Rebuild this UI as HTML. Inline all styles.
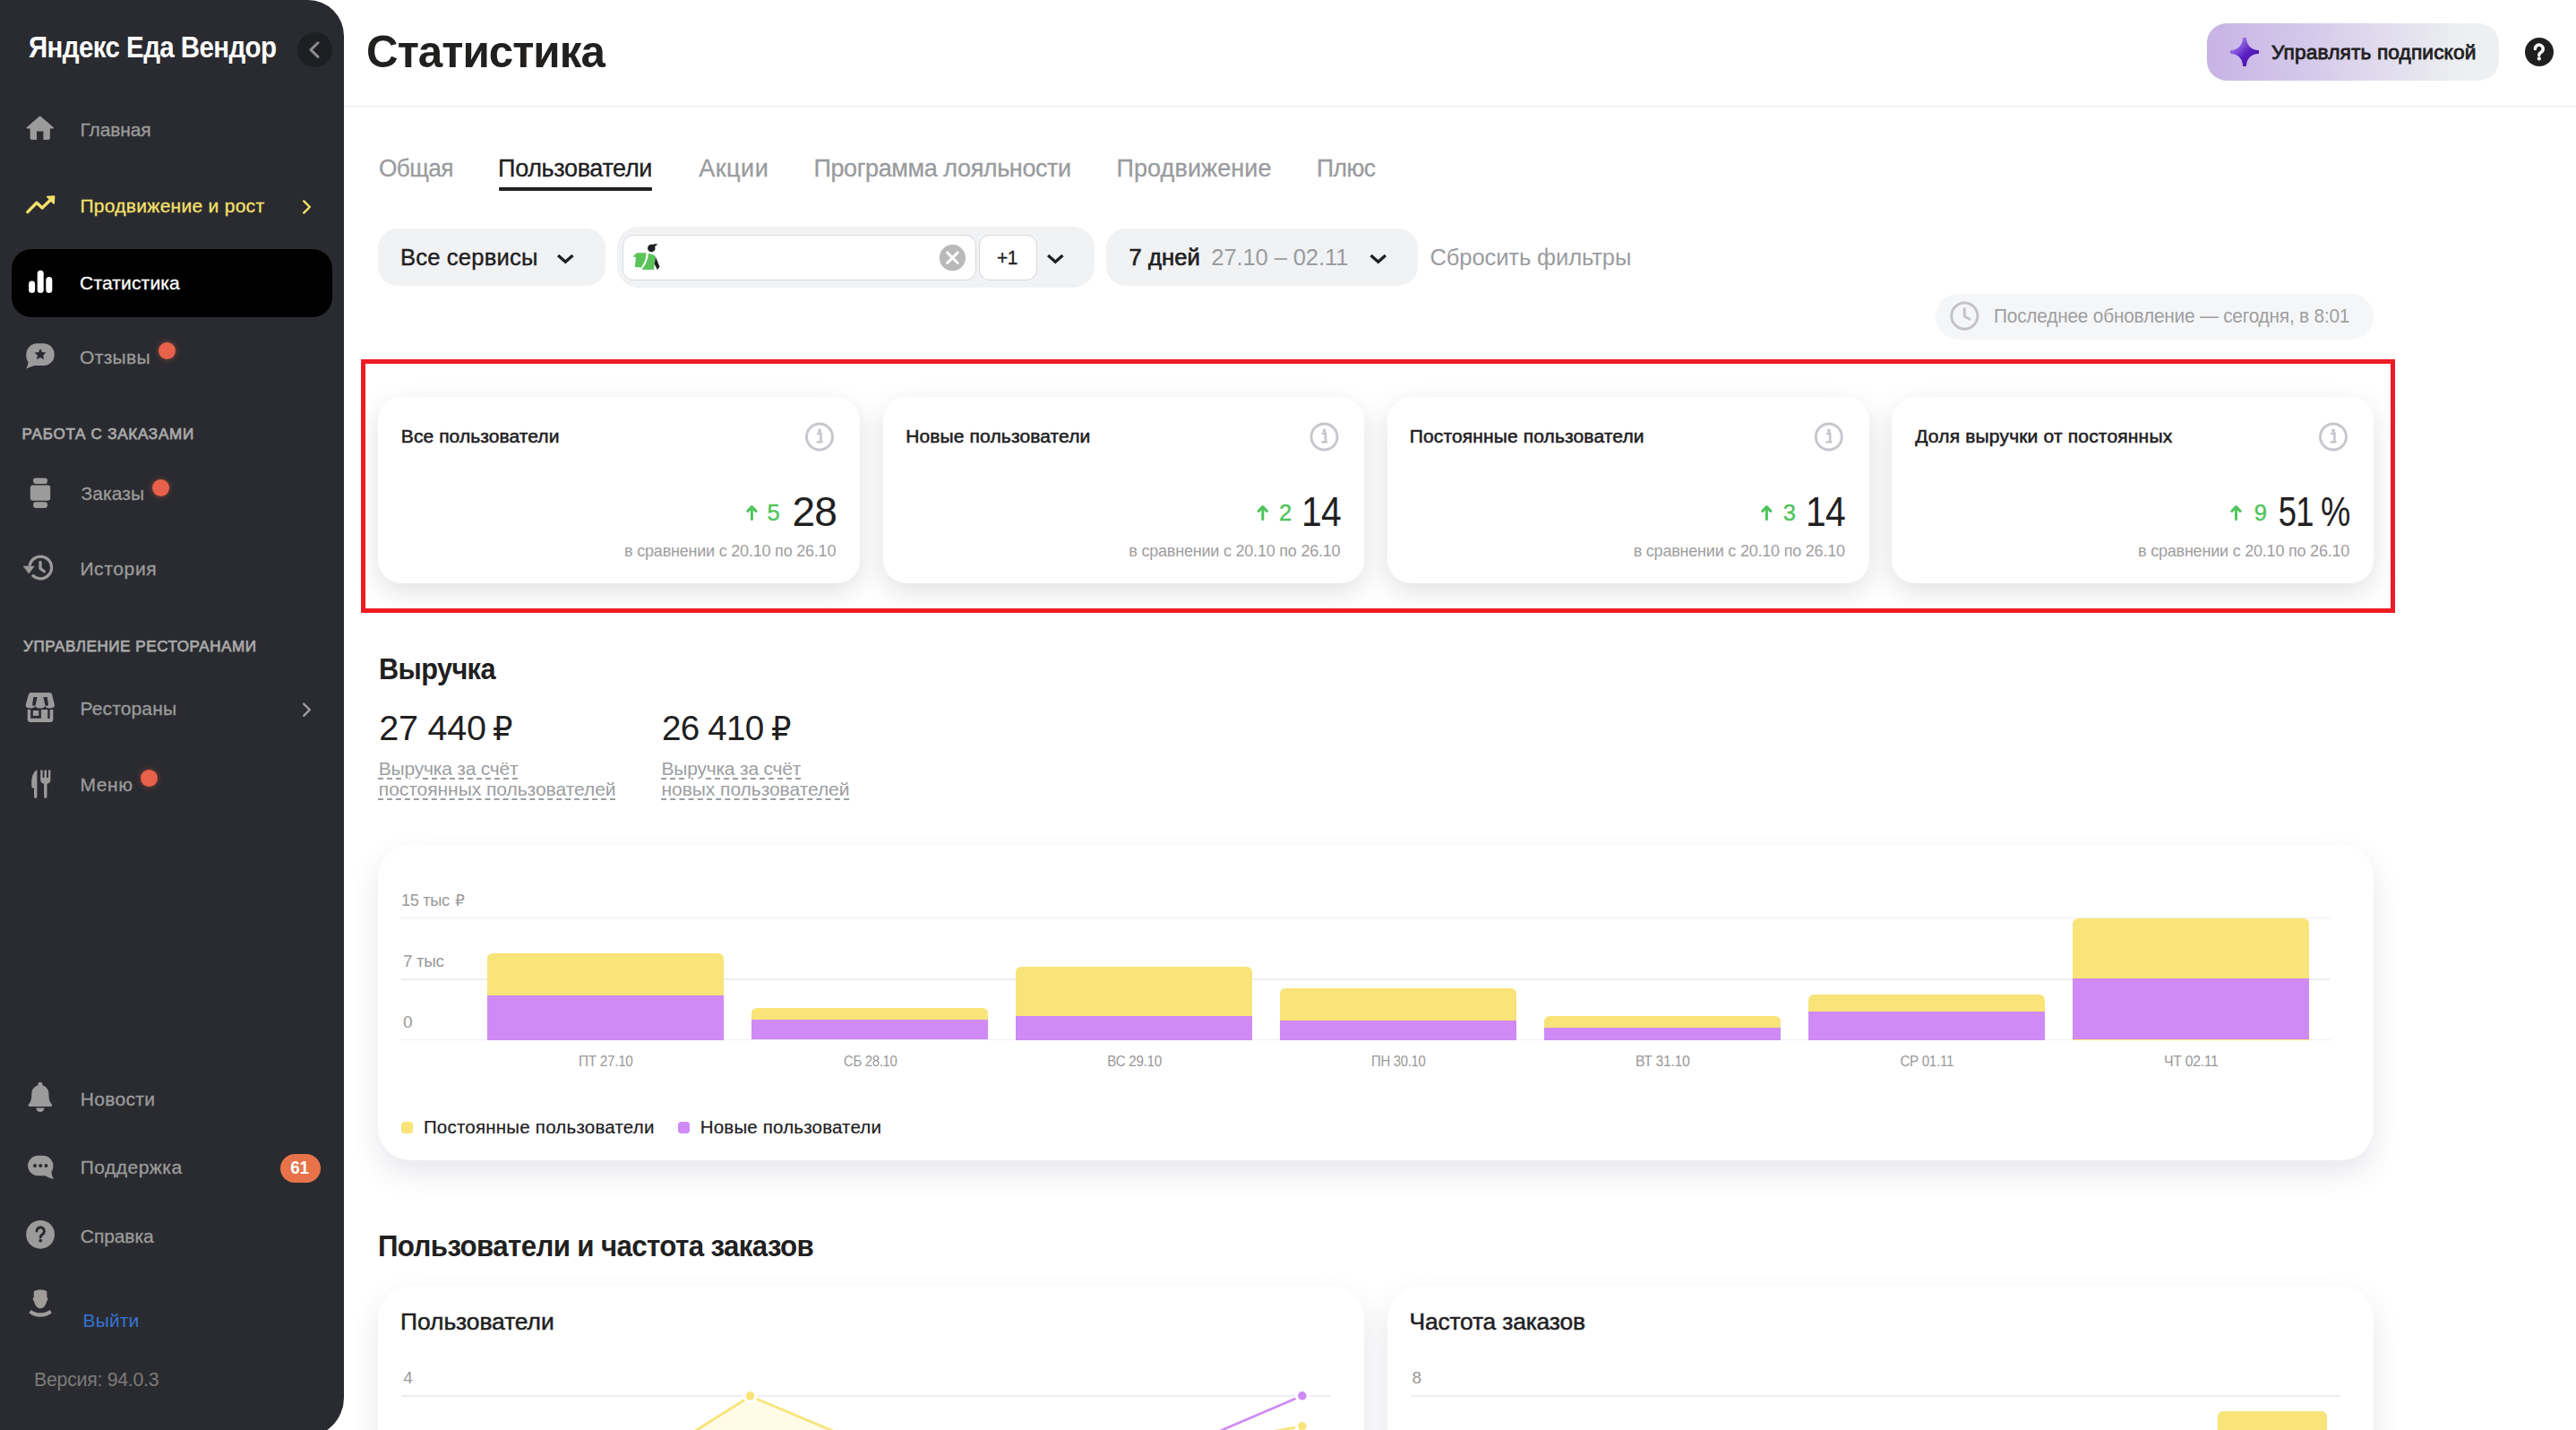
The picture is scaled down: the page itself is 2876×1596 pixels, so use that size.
<!DOCTYPE html>
<html lang="ru"><head><meta charset="utf-8"><title>Статистика</title>
<style>
html,body{margin:0;padding:0}
body{width:2876px;height:1596px;overflow:hidden;background:#fff;position:relative;font-family:"Liberation Sans","DejaVu Sans",sans-serif;color:#21201f}
.t{position:absolute;white-space:nowrap;line-height:1}
.du{text-decoration:underline dashed;text-decoration-thickness:1.5px;text-underline-offset:3px}
.a{position:absolute}
.sb{left:0;top:0;width:384px;height:1604px;background:#2a2b30;border-radius:0 40px 44px 0}
.card{position:absolute;background:#fff;border-radius:26px;box-shadow:0 10px 30px rgba(0,0,0,.12)}
.bigcard{position:absolute;background:#fff;border-radius:36px;box-shadow:0 14px 32px rgba(50,60,90,.12)}
.pill{position:absolute;background:#f1f2f4;border-radius:22px}
.wbox{position:absolute;background:#fff;border:1px solid #d6d8dc;border-radius:12px;box-sizing:border-box}
.dot{position:absolute;width:19px;height:19px;border-radius:50%;background:#e8614a;box-shadow:0 0 6px rgba(232,97,74,.5)}
.gl{position:absolute;height:1.8px;background:#eceef1}
svg{position:absolute;overflow:visible}

</style></head><body>
<div class="a sb"></div>
<div class="a" style="left:332px;top:36px;width:39px;height:39px;border-radius:50%;background:#1e1f22"></div>
<div class="a" style="left:13px;top:278px;width:358px;height:76px;border-radius:22px;background:#000"></div>
<div class="dot" style="left:177px;top:382.2px"></div>
<div class="dot" style="left:170px;top:535px"></div>
<div class="dot" style="left:157px;top:859px"></div>
<div class="a" style="left:313px;top:1288px;width:45px;height:32px;border-radius:16px;background:#e8734a"></div>

<div class="a" style="left:384px;top:117.5px;width:2492px;height:1.5px;background:#e4e6ea"></div>
<div class="a" style="left:557px;top:209px;width:171px;height:4px;background:#21201f;border-radius:1px"></div>
<div class="pill" style="left:422px;top:255px;width:254px;height:64px"></div>
<div class="pill" style="left:689px;top:253px;width:533px;height:68px;border-radius:24px"></div>
<div class="wbox" style="left:695px;top:262px;width:394.5px;height:51px"></div>
<div class="wbox" style="left:1093px;top:262px;width:64.5px;height:51px"></div>
<div class="pill" style="left:1235px;top:255px;width:348px;height:64px"></div>
<div class="a" style="left:2464px;top:26px;width:326px;height:64px;border-radius:22px;background:linear-gradient(90deg,#c7b3e5 0%,#d5c9ea 35%,#eceef1 85%,#eef0f2 100%)"></div>
<div class="a" style="left:2819px;top:42px;width:32px;height:32px;border-radius:50%;background:#1f1f1f"></div>
<div class="a" style="left:2161px;top:328px;width:489px;height:51px;border-radius:26px;background:#f5f6f8"></div>

<div class="card" style="left:422px;top:443px;width:537.8px;height:207.8px"></div>
<div class="card" style="left:985.6px;top:443px;width:537.6px;height:207.8px"></div>
<div class="card" style="left:1549px;top:443px;width:537.5px;height:207.8px"></div>
<div class="card" style="left:2112.2px;top:443px;width:537.8px;height:207.8px"></div>

<div class="a" style="left:403px;top:401px;width:2271px;height:283px;border:5px solid #ed1c24;box-sizing:border-box"></div>
<div class="bigcard" style="left:422px;top:943px;width:2228px;height:352.2px"></div>
<div class="gl" style="left:448px;top:1023.7px;width:2154px"></div>
<div class="gl" style="left:448px;top:1091.8px;width:2154px"></div>
<div class="gl" style="left:448px;top:1159.7px;width:2154px"></div>

<div class="bigcard" style="left:422px;top:1436px;width:1101px;height:300px"></div>
<div class="bigcard" style="left:1549px;top:1436px;width:1101px;height:300px"></div>
<div class="gl" style="left:448px;top:1557.1px;width:1038px"></div>
<div class="gl" style="left:1575px;top:1557.1px;width:1038px"></div>
<div class="a" style="left:544.2px;top:1064.4px;width:264.1px;height:96.1px;background:#f8e478;border-radius:6px 6px 0 0"></div>
<div class="a" style="left:544.2px;top:1110.5px;width:264.1px;height:50.0px;background:#d08af5"></div>
<div class="a" style="left:839.1px;top:1124.8px;width:264.1px;height:35.7px;background:#f8e478;border-radius:6px 6px 0 0"></div>
<div class="a" style="left:839.1px;top:1137.7px;width:264.1px;height:22.8px;background:#d08af5"></div>
<div class="a" style="left:1134.1px;top:1079.0px;width:264.1px;height:81.5px;background:#f8e478;border-radius:6px 6px 0 0"></div>
<div class="a" style="left:1134.1px;top:1134.0px;width:264.1px;height:26.5px;background:#d08af5"></div>
<div class="a" style="left:1429.0px;top:1103.3px;width:264.1px;height:57.2px;background:#f8e478;border-radius:6px 6px 0 0"></div>
<div class="a" style="left:1429.0px;top:1139.0px;width:264.1px;height:21.5px;background:#d08af5"></div>
<div class="a" style="left:1723.9px;top:1133.6px;width:264.1px;height:26.9px;background:#f8e478;border-radius:6px 6px 0 0"></div>
<div class="a" style="left:1723.9px;top:1147.0px;width:264.1px;height:13.5px;background:#d08af5"></div>
<div class="a" style="left:2018.9px;top:1109.8px;width:264.1px;height:50.7px;background:#f8e478;border-radius:6px 6px 0 0"></div>
<div class="a" style="left:2018.9px;top:1129.0px;width:264.1px;height:31.5px;background:#d08af5"></div>
<div class="a" style="left:2313.8px;top:1025.0px;width:264.1px;height:135.5px;background:#f8e478;border-radius:6px 6px 0 0"></div>
<div class="a" style="left:2313.8px;top:1091.6px;width:264.1px;height:68.9px;background:#d08af5"></div>
<div class="a" style="left:448.2px;top:1252px;width:12.8px;height:12.8px;border-radius:3.5px;background:#f8e478"></div>
<div class="a" style="left:756.8px;top:1252px;width:12.8px;height:12.8px;border-radius:3.5px;background:#d08af5"></div>
<svg width="2876" height="1596" viewBox="0 0 2876 1596" style="left:0;top:0">
<path d="M774.8 1598 L837.6 1558.3 L932.2 1598 Z" fill="#fffbe6"/>
<path d="M774.8 1598 L837.6 1558.3 L932.2 1598" fill="none" stroke="#f8e478" stroke-width="2.8" stroke-linejoin="round"/>
<path d="M1359.7 1598 L1453.9 1557.8" fill="none" stroke="#d08af5" stroke-width="2.7"/>
<path d="M1418 1598 L1453.9 1591.8" fill="none" stroke="#f8e478" stroke-width="2.7"/>
<circle cx="837.6" cy="1558" r="6.4" fill="#f8e478" stroke="#fff" stroke-width="3.2"/>
<circle cx="1453.9" cy="1557.8" r="6.4" fill="#d08af5" stroke="#fff" stroke-width="3.2"/>
<circle cx="1453.9" cy="1591.8" r="6.4" fill="#f8e478" stroke="#fff" stroke-width="3.2"/>
</svg>
<div class="a" style="left:2476.1px;top:1575px;width:121.7px;height:40px;background:#f8e478;border-radius:6px 6px 0 0"></div>
<svg width="2876" height="1596" viewBox="0 0 2876 1596" style="left:0;top:0">
<defs>
<linearGradient id="sg" x1="0" y1="0" x2="1" y2="1"><stop offset="0.15" stop-color="#a683ee"/><stop offset="0.55" stop-color="#5a1fc2"/><stop offset="1" stop-color="#3d0f96"/></linearGradient>
</defs>
<!-- collapse chevron -->
<path d="M355 47.8 l-8 7.8 l8 7.8" fill="none" stroke="#8c8c8c" stroke-width="3" stroke-linecap="round" stroke-linejoin="round"/>
<!-- home -->
<g transform="translate(29.8 129)" fill="#9b9b9b">
<path d="M14.9 0.3 L30 13.2 a0.8 0.8 0 0 1 -0.5 1.3 H26 V25.2 a1.8 1.8 0 0 1 -1.8 1.8 H18.6 V17.5 H11.2 V27 H5.6 a1.8 1.8 0 0 1 -1.8 -1.8 V14.5 H0.3 a0.8 0.8 0 0 1 -0.5 -1.3 Z"/>
</g>
<!-- trending -->
<g transform="translate(29.8 218.3)" fill="none" stroke="#f5e16b" stroke-width="3.4" stroke-linecap="round" stroke-linejoin="round">
<path d="M1 18.3 L11.2 8 L17.3 13.8 L26.5 5"/>
<path d="M22.8 1.2 L30.8 0.6 L30.4 8.8 Z" fill="#f5e16b" stroke-width="1.5"/>
</g>
<!-- bars -->
<g fill="#fff">
<rect x="32.1" y="313.6" width="7" height="13.4" rx="3.5"/>
<rect x="41.7" y="301.7" width="7" height="25.3" rx="3.5"/>
<rect x="51.3" y="309" width="7" height="18" rx="3.5"/>
</g>
<!-- review bubble -->
<g transform="translate(29 383.3)">
<path d="M12.5 0 H19.5 A12.2 12.2 0 0 1 31.7 12.2 V12.6 A12.2 12.2 0 0 1 19.5 24.8 H9.5 C6.5 25.5 3.5 26.8 0.3 28.2 C1.3 25.8 2.3 23.5 2.6 21 A12.2 12.2 0 0 1 0.3 12.4 A12.2 12.2 0 0 1 12.5 0 Z" fill="#9b9b9b"/>
<path d="M16 5.6 l1.95 4.1 4.5 .6 -3.3 3.1 .85 4.45 -4 -2.2 -4 2.2 .85 -4.45 -3.3 -3.1 4.5 -.6 Z" fill="#2a2b30"/>
</g>
<!-- orders (watch) -->
<g fill="#9b9b9b">
<rect x="33.8" y="541.6" width="22.4" height="17.2" rx="3"/>
<rect x="37.1" y="533.4" width="15.8" height="6.6" rx="2.4"/>
<rect x="37.1" y="560.3" width="15.8" height="6.6" rx="2.4"/>
</g>
<!-- history -->
<g transform="translate(45.2 633.5)" fill="none" stroke="#9b9b9b" stroke-width="3.3" stroke-linecap="round" stroke-linejoin="round">
<path d="M-12.2 -2 A12.35 12.35 0 1 1 -9.2 8.2" stroke-linecap="butt"/>
<path d="M-0.2 -6.2 V1 L4.1 4.3"/>
<path d="M-18.8 -1.5 H-7 L-12.8 6.4 Z" fill="#9b9b9b" stroke-width="0.6"/>
</g>
<!-- store -->
<g fill="#9b9b9b">
<path d="M34.4 773 H55.6 a2.5 2.5 0 0 1 2.4 1.8 L60.9 786.6 V787.6 a5.37 3 0 0 1 -10.73 0 a5.37 3 0 0 1 -10.74 0 a5.37 3 0 0 1 -10.73 0 V786.6 L32 774.8 a2.5 2.5 0 0 1 2.4 -1.8 Z"/>
<path d="M30.7 791.9 H59.3 V802.7 a3.2 3.2 0 0 1 -3.2 3.2 H33.9 a3.2 3.2 0 0 1 -3.2 -3.2 Z"/>
<path d="M37.3 778.1 H41.7 L39.8 786 a1.9 1.9 0 0 1 -3.7 .6 Z M48.3 778.1 H52.7 L54 786.6 a1.9 1.9 0 0 1 -3.7 -.4 Z M34.2 791.9 H45.9 V801.7 H34.2 Z M53.2 791.9 H55.7 V801 a1.25 1.25 0 0 1 -2.5 0 Z" fill="#2a2b30"/>
<rect x="36.8" y="793" width="6.5" height="5.9"/>
</g>
<!-- fork & knife -->
<g transform="translate(34.6 859)" fill="#9b9b9b">
<path d="M6.8 0 V30.2 a1.7 1.7 0 0 1 -3.4 0 V20.4 H1 C-0.2 12 1 3.5 6.8 0 Z"/>
<path d="M10.6 0.6 h2.4 V9 h1.9 V0.6 h2.6 V9 h1.9 V0.6 h2.4 V11.2 a4.6 4.6 0 0 1 -3.9 4.5 V30.2 a1.7 1.7 0 0 1 -3.4 0 V15.7 a4.6 4.6 0 0 1 -3.9 -4.5 Z"/>
</g>
<!-- bell -->
<g transform="translate(31.7 1207.8)" fill="#9b9b9b">
<path d="M13.2 0 a2.6 2.6 0 0 1 2.6 2.6 V3.4 C20.6 4.8 22.8 9 22.8 13.6 C22.8 19.5 24 22.3 26 24.4 a1.6 1.6 0 0 1 -1.2 2.8 H1.6 A1.6 1.6 0 0 1 0.4 24.4 C2.4 22.3 3.6 19.5 3.6 13.6 C3.6 9 5.8 4.8 10.6 3.4 V2.6 A2.6 2.6 0 0 1 13.2 0 Z"/>
<path d="M8.6 28.6 h9.2 a4.6 4.6 0 0 1 -9.2 0 Z"/>
</g>
<!-- chat -->
<g transform="translate(30.8 1289.7)">
<path d="M12 0 H17 A11.6 11.6 0 0 1 28.6 11.3 C28.6 14.5 27.8 16.6 26.6 18.4 C26.9 21.2 27.8 23.8 29 26.4 C25.6 25.6 22.6 24.3 20 22.6 H12 A11.6 11.6 0 0 1 0.2 11.3 A11.6 11.6 0 0 1 12 0 Z" fill="#9b9b9b"/>
<circle cx="8.2" cy="11.4" r="2" fill="#2a2b30"/><circle cx="14.4" cy="11.4" r="2" fill="#2a2b30"/><circle cx="20.6" cy="11.4" r="2" fill="#2a2b30"/>
</g>
<!-- help (sidebar) -->
<circle cx="45.1" cy="1377.8" r="15.9" fill="#9b9b9b"/>
<path d="M41 1374 a4.2 4.2 0 1 1 6.4 3.6 c-1.5 .9 -2.2 1.7 -2.2 3.2" fill="none" stroke="#2a2b30" stroke-width="3" stroke-linecap="round"/>
<circle cx="45.2" cy="1384.6" r="1.9" fill="#2a2b30"/>
<!-- user -->
<g transform="translate(32.8 1438.9)" fill="#a09c99">
<path d="M5 2.4 C8 0 16.6 0 19.6 2.4 V9 C21 9.4 21 12.6 19.4 13 C18.6 17.6 15.6 21.4 12.3 21.4 C9 21.4 6 17.6 5.2 13 C3.6 12.6 3.6 9.4 5 9 Z"/>
<path d="M-0.4 26.4 C6.5 32.4 18 32.4 25 26.4 L22.8 23 C16.8 27.6 7.8 27.6 1.8 23 Z"/>
</g>
<!-- rest chevrons -->
<path d="M339.2 224.4 l6.6 6.6 l-6.6 6.6" fill="none" stroke="#f5e16b" stroke-width="2.4" stroke-linecap="round" stroke-linejoin="round"/>
<path d="M339.2 785.6 l6.6 6.6 l-6.6 6.6" fill="none" stroke="#9b9b9b" stroke-width="2.4" stroke-linecap="round" stroke-linejoin="round"/>

<!-- filter chevrons -->
<g fill="none" stroke="#1f2023" stroke-width="3.3" stroke-linecap="butt" stroke-linejoin="miter">
<path d="M623.1 285 L631.3 292.2 L639.5 285"/>
<path d="M1170.1 285 L1178.3 292.2 L1186.5 285"/>
<path d="M1530.5 285 L1538.7 292.2 L1546.9 285"/>
</g>
<!-- clear -->
<circle cx="1063.4" cy="287.7" r="14.6" fill="#b9b9b9"/>
<path d="M1057.6 281.9 l11.6 11.6 M1069.2 281.9 l-11.6 11.6" stroke="#fff" stroke-width="3" stroke-linecap="round"/>
<!-- courier -->
<g>
<path d="M711.4 282.3 L721.6 282.3 C721.4 287.2 720 292.6 716.9 296.8 L716.4 298.4 L708.8 298 L710 286.9 L706.9 286.5 C708.2 284.6 709.6 283 711.4 282.3 Z" fill="#5bc358"/>
<path d="M723.9 283 C727.6 283.3 730.4 284.6 731.8 286.2 L730 300.9 L716.8 301.1 L717.6 299 C721.2 295 723.4 289.6 723.9 283 Z" fill="#5bc358"/>
<path d="M731.9 286.4 L736.3 297.3 C735.8 298.8 735 300.2 733.8 301 L730.8 294.8 Z" fill="#1f2023"/>
<circle cx="727.3" cy="276.9" r="4.25" fill="#1f2023"/>
<path d="M728.6 273.2 C730.4 272 732.2 272.4 734 272.1 C733.6 273.8 732 274.8 730.4 275.2 Z" fill="#1f2023"/>
</g>
<!-- star sparkle -->
<path d="M2504.2 42 H2507.8 C2508.6 51 2513 55.4 2522 56.2 V59.8 C2513 60.6 2508.6 65 2507.8 74 H2504.2 C2503.4 65 2499 60.6 2490 59.8 V56.2 C2499 55.4 2503.4 51 2504.2 42 Z" fill="url(#sg)"/>
<!-- help top -->
<path d="M2830.4 54.6 a4.4 4.4 0 1 1 6.7 3.7 c-1.5 .9 -2.3 1.7 -2.3 3.1" fill="none" stroke="#fff" stroke-width="3.5" stroke-linecap="round"/>
<circle cx="2834.8" cy="65.4" r="2.1" fill="#fff"/>
<!-- clock -->
<circle cx="2193.3" cy="352.6" r="14.6" fill="none" stroke="#c4c4c6" stroke-width="3"/>
<path d="M2193.3 344.5 V353 L2199 356.2" fill="none" stroke="#c4c4c6" stroke-width="3" stroke-linecap="round" stroke-linejoin="round"/>
<!-- info icons -->
<g fill="none" stroke="#c5c7cc" stroke-width="2.9">
<circle cx="915" cy="487.5" r="14.5"/>
<circle cx="915" cy="480.5" r="1.9" fill="#c5c7cc" stroke="none"/>
<path d="M912.2 484.2 L916.4 483.4 V492.6 M911.8 493.3 H918.6" stroke-width="2.6" stroke-linejoin="round"/>
</g>
<g transform="translate(563.5 0)"><g fill="none" stroke="#c5c7cc" stroke-width="2.9">
<circle cx="915" cy="487.5" r="14.5"/>
<circle cx="915" cy="480.5" r="1.9" fill="#c5c7cc" stroke="none"/>
<path d="M912.2 484.2 L916.4 483.4 V492.6 M911.8 493.3 H918.6" stroke-width="2.6" stroke-linejoin="round"/>
</g></g><g transform="translate(1126.8 0)"><g fill="none" stroke="#c5c7cc" stroke-width="2.9">
<circle cx="915" cy="487.5" r="14.5"/>
<circle cx="915" cy="480.5" r="1.9" fill="#c5c7cc" stroke="none"/>
<path d="M912.2 484.2 L916.4 483.4 V492.6 M911.8 493.3 H918.6" stroke-width="2.6" stroke-linejoin="round"/>
</g></g><g transform="translate(1690 0)"><g fill="none" stroke="#c5c7cc" stroke-width="2.9">
<circle cx="915" cy="487.5" r="14.5"/>
<circle cx="915" cy="480.5" r="1.9" fill="#c5c7cc" stroke="none"/>
<path d="M912.2 484.2 L916.4 483.4 V492.6 M911.8 493.3 H918.6" stroke-width="2.6" stroke-linejoin="round"/>
</g></g>
<!-- green arrows -->
<g fill="none" stroke="#4fc45b" stroke-width="3" stroke-linecap="round" stroke-linejoin="round">
<path d="M839.4 579.6 V566.4 M834.8 570.4 L839.4 565.6 L844 570.4"/>
</g>
<g transform="translate(570.4 0)"><g fill="none" stroke="#4fc45b" stroke-width="3" stroke-linecap="round" stroke-linejoin="round">
<path d="M839.4 579.6 V566.4 M834.8 570.4 L839.4 565.6 L844 570.4"/>
</g></g><g transform="translate(1133 0)"><g fill="none" stroke="#4fc45b" stroke-width="3" stroke-linecap="round" stroke-linejoin="round">
<path d="M839.4 579.6 V566.4 M834.8 570.4 L839.4 565.6 L844 570.4"/>
</g></g><g transform="translate(1657.1 0)"><g fill="none" stroke="#4fc45b" stroke-width="3" stroke-linecap="round" stroke-linejoin="round">
<path d="M839.4 579.6 V566.4 M834.8 570.4 L839.4 565.6 L844 570.4"/>
</g></g>
</svg>

<span class="t" style="font-size:34px;left:31.8px;top:35.0px;color:#ffffff;font-weight:700;letter-spacing:-0.68px;transform:scaleX(0.8679);transform-origin:left center;">Яндекс Еда Вендор</span>
<span class="t" style="font-size:21px;left:89.5px;top:134.0px;color:#9b9b9b;letter-spacing:-0.13px;-webkit-text-stroke:0.3px currentColor;">Главная</span>
<span class="t" style="font-size:21px;left:89.5px;top:219.0px;color:#f5e16b;letter-spacing:0.28px;-webkit-text-stroke:0.3px currentColor;">Продвижение и рост</span>
<span class="t" style="font-size:21px;left:89.1px;top:305.0px;color:#ffffff;letter-spacing:0.15px;-webkit-text-stroke:0.3px currentColor;">Статистика</span>
<span class="t" style="font-size:21px;left:89.1px;top:388.0px;color:#9b9b9b;letter-spacing:0.31px;-webkit-text-stroke:0.3px currentColor;">Отзывы</span>
<span class="t" style="font-size:17px;left:24.6px;top:476.0px;color:#a9a9a9;letter-spacing:0.77px;-webkit-text-stroke:0.75px currentColor;">РАБОТА С ЗАКАЗАМИ</span>
<span class="t" style="font-size:21px;left:90.4px;top:540.0px;color:#9b9b9b;letter-spacing:0.12px;-webkit-text-stroke:0.3px currentColor;">Заказы</span>
<span class="t" style="font-size:21px;left:89.4px;top:624.0px;color:#9b9b9b;letter-spacing:0.64px;-webkit-text-stroke:0.3px currentColor;">История</span>
<span class="t" style="font-size:17px;left:26.1px;top:713.0px;color:#a9a9a9;letter-spacing:0.59px;-webkit-text-stroke:0.75px currentColor;">УПРАВЛЕНИЕ РЕСТОРАНАМИ</span>
<span class="t" style="font-size:21px;left:89.4px;top:780.0px;color:#9b9b9b;letter-spacing:0.16px;-webkit-text-stroke:0.3px currentColor;">Рестораны</span>
<span class="t" style="font-size:21px;left:89.4px;top:865.0px;color:#9b9b9b;letter-spacing:0.63px;-webkit-text-stroke:0.3px currentColor;">Меню</span>
<span class="t" style="font-size:21px;left:89.8px;top:1216.0px;color:#9b9b9b;letter-spacing:0.32px;-webkit-text-stroke:0.3px currentColor;">Новости</span>
<span class="t" style="font-size:21px;left:89.8px;top:1292.0px;color:#9b9b9b;letter-spacing:0.47px;-webkit-text-stroke:0.3px currentColor;">Поддержка</span>
<span class="t" style="font-size:21px;left:89.8px;top:1369.0px;color:#9b9b9b;letter-spacing:-0.08px;-webkit-text-stroke:0.3px currentColor;">Справка</span>
<span class="t" style="font-size:21px;left:92.6px;top:1463.0px;color:#3474d4;letter-spacing:0.11px;">Выйти</span>
<span class="t" style="font-size:21.3px;left:38.1px;top:1530.0px;color:#7c7a78;letter-spacing:-0.28px;">Версия: 94.0.3</span>
<span class="t" style="font-size:19.5px;left:323.9px;top:1294.0px;color:#ffffff;font-weight:700;letter-spacing:-0.39px;transform:scaleX(0.9695);transform-origin:center center;">61</span>
<span class="t" style="font-size:49.5px;left:408.9px;top:33.0px;font-weight:700;letter-spacing:-0.99px;transform:scaleX(0.9964);transform-origin:left center;">Статистика</span>
<span class="t" style="font-size:27px;left:422.5px;top:175.0px;color:#999b9e;letter-spacing:-0.54px;-webkit-text-stroke:0.3px currentColor;transform:scaleX(0.9696);transform-origin:left center;">Общая</span>
<span class="t" style="font-size:27px;left:556.1px;top:175.0px;letter-spacing:-0.36px;-webkit-text-stroke:0.3px currentColor;">Пользователи</span>
<span class="t" style="font-size:27px;left:780.2px;top:175.0px;color:#999b9e;letter-spacing:0.53px;-webkit-text-stroke:0.3px currentColor;">Акции</span>
<span class="t" style="font-size:27px;left:908.4px;top:175.0px;color:#999b9e;letter-spacing:-0.40px;-webkit-text-stroke:0.3px currentColor;">Программа лояльности</span>
<span class="t" style="font-size:27px;left:1246.5px;top:175.0px;color:#999b9e;letter-spacing:0.09px;-webkit-text-stroke:0.3px currentColor;">Продвижение</span>
<span class="t" style="font-size:27px;left:1469.6px;top:175.0px;color:#999b9e;letter-spacing:-0.54px;-webkit-text-stroke:0.3px currentColor;transform:scaleX(0.9801);transform-origin:left center;">Плюс</span>
<span class="t" style="font-size:25.6px;left:446.9px;top:275.0px;letter-spacing:0.19px;-webkit-text-stroke:0.4px currentColor;">Все сервисы</span>
<span class="t" style="font-size:22px;left:1112.8px;top:277.0px;letter-spacing:-0.44px;-webkit-text-stroke:0.3px currentColor;transform:scaleX(0.9484);transform-origin:left center;">+1</span>
<span class="t" style="font-size:25.6px;left:1260.5px;top:275.0px;letter-spacing:0.07px;-webkit-text-stroke:0.7px currentColor;">7 дней</span>
<span class="t" style="font-size:25.6px;left:1352.3px;top:275.0px;color:#9a9c9f;letter-spacing:-0.13px;">27.10 – 02.11</span>
<span class="t" style="font-size:25.6px;left:1596.4px;top:275.0px;color:#9a9c9f;letter-spacing:-0.13px;">Сбросить фильтры</span>
<span class="t" style="font-size:22.7px;left:2536.1px;top:47.0px;letter-spacing:0.13px;-webkit-text-stroke:0.8px currentColor;">Управлять подпиской</span>
<span class="t" style="font-size:21.3px;left:2225.5px;top:343.0px;color:#9e9e9e;letter-spacing:-0.21px;transform:scaleX(0.9779);transform-origin:left center;">Последнее обновление — сегодня, в 8:01</span>
<span class="t" style="font-size:21px;left:447.8px;top:476.0px;letter-spacing:0.08px;-webkit-text-stroke:0.55px currentColor;">Все пользователи</span>
<span class="t" style="font-size:21px;left:1011.2px;top:476.0px;letter-spacing:0.13px;-webkit-text-stroke:0.55px currentColor;">Новые пользователи</span>
<span class="t" style="font-size:21px;left:1573.8px;top:476.0px;letter-spacing:0.13px;-webkit-text-stroke:0.55px currentColor;">Постоянные пользователи</span>
<span class="t" style="font-size:21px;left:2138.2px;top:476.0px;letter-spacing:0.18px;-webkit-text-stroke:0.55px currentColor;">Доля выручки от постоянных</span>
<span class="t" style="font-size:46.5px;left:884.2px;top:548.0px;letter-spacing:-0.93px;transform:scaleX(0.9908);transform-origin:right center;">28</span>
<span class="t" style="font-size:46.5px;left:1446.7px;top:548.0px;letter-spacing:-0.93px;transform:scaleX(0.8779);transform-origin:right center;">14</span>
<span class="t" style="font-size:46.5px;left:2010.1px;top:548.0px;letter-spacing:-0.93px;transform:scaleX(0.8779);transform-origin:right center;">14</span>
<span class="t" style="font-size:46.5px;left:2533.0px;top:548.0px;letter-spacing:-0.93px;transform:scaleX(0.7824);transform-origin:right center;">51</span>
<span class="t" style="font-size:46.5px;left:2583.4px;top:548.0px;transform:scaleX(0.8051);transform-origin:right center;">%</span>
<span class="t" style="font-size:25.5px;left:856.4px;top:560.0px;color:#4fc45b;-webkit-text-stroke:0.4px currentColor;">5</span>
<span class="t" style="font-size:25.5px;left:1428.1px;top:560.0px;color:#4fc45b;-webkit-text-stroke:0.4px currentColor;">2</span>
<span class="t" style="font-size:25.5px;left:1990.7px;top:560.0px;color:#4fc45b;-webkit-text-stroke:0.4px currentColor;">3</span>
<span class="t" style="font-size:25.5px;left:2516.7px;top:560.0px;color:#4fc45b;-webkit-text-stroke:0.4px currentColor;">9</span>
<span class="t" style="font-size:18px;left:697.1px;top:606.0px;color:#9e9e9e;letter-spacing:-0.21px;">в сравнении с 20.10 по 26.10</span>
<span class="t" style="font-size:18px;left:1260.3px;top:606.0px;color:#9e9e9e;letter-spacing:-0.21px;">в сравнении с 20.10 по 26.10</span>
<span class="t" style="font-size:18px;left:1823.7px;top:606.0px;color:#9e9e9e;letter-spacing:-0.21px;">в сравнении с 20.10 по 26.10</span>
<span class="t" style="font-size:18px;left:2387.0px;top:606.0px;color:#9e9e9e;letter-spacing:-0.21px;">в сравнении с 20.10 по 26.10</span>
<span class="t" style="font-size:33px;left:422.7px;top:730.0px;font-weight:700;letter-spacing:-0.66px;transform:scaleX(0.9308);transform-origin:left center;">Выручка</span>
<span class="t" style="font-size:39.5px;left:423.2px;top:793.0px;letter-spacing:-0.23px;">27 440</span>
<span class="t" style="font-size:38px;left:550.3px;top:794.0px;transform:scaleX(0.9273);transform-origin:left center;font-family:'DejaVu Sans',sans-serif;">₽</span>
<span class="t" style="font-size:39.5px;left:739.2px;top:793.0px;letter-spacing:-0.79px;transform:scaleX(0.9774);transform-origin:left center;">26 410</span>
<span class="t" style="font-size:38px;left:860.9px;top:794.0px;transform:scaleX(0.9273);transform-origin:left center;font-family:'DejaVu Sans',sans-serif;">₽</span>
<span class="t du" style="font-size:21px;left:422.8px;top:847.0px;color:#9c9ea1;letter-spacing:-0.21px;">Выручка за счёт</span>
<span class="t du" style="font-size:21px;left:422.8px;top:870.0px;color:#9c9ea1;letter-spacing:-0.04px;">постоянных пользователей</span>
<span class="t du" style="font-size:21px;left:738.5px;top:847.0px;color:#9c9ea1;letter-spacing:-0.21px;">Выручка за счёт</span>
<span class="t du" style="font-size:21px;left:738.5px;top:870.0px;color:#9c9ea1;letter-spacing:-0.05px;">новых пользователей</span>
<span class="t" style="font-size:19px;left:448.4px;top:995.0px;color:#999999;letter-spacing:-0.38px;transform:scaleX(0.9586);transform-origin:left center;">15 тыс</span>
<span class="t" style="font-size:18.2px;left:507.6px;top:996.0px;color:#999999;transform:scaleX(0.9364);transform-origin:left center;font-family:'DejaVu Sans',sans-serif;">₽</span>
<span class="t" style="font-size:19px;left:450.4px;top:1063.0px;color:#999999;letter-spacing:-0.38px;transform:scaleX(0.9916);transform-origin:left center;">7 тыс</span>
<span class="t" style="font-size:19px;left:450.0px;top:1131.0px;color:#999999;">0</span>
<span class="t" style="font-size:17.4px;left:642.3px;top:1176.0px;color:#999999;letter-spacing:-0.35px;transform:scaleX(0.8803);transform-origin:center center;">ПТ 27.10</span>
<span class="t" style="font-size:17.4px;left:937.1px;top:1176.0px;color:#999999;letter-spacing:-0.35px;transform:scaleX(0.8568);transform-origin:center center;">СБ 28.10</span>
<span class="t" style="font-size:17.4px;left:1231.6px;top:1176.0px;color:#999999;letter-spacing:-0.35px;transform:scaleX(0.8743);transform-origin:center center;">ВС 29.10</span>
<span class="t" style="font-size:17.4px;left:1525.9px;top:1176.0px;color:#999999;letter-spacing:-0.35px;transform:scaleX(0.8557);transform-origin:center center;">ПН 30.10</span>
<span class="t" style="font-size:17.4px;left:1822.7px;top:1176.0px;color:#999999;letter-spacing:-0.35px;transform:scaleX(0.9081);transform-origin:center center;">ВТ 31.10</span>
<span class="t" style="font-size:17.4px;left:2117.2px;top:1176.0px;color:#999999;letter-spacing:-0.35px;transform:scaleX(0.8707);transform-origin:center center;">СР 01.11</span>
<span class="t" style="font-size:17.4px;left:2412.5px;top:1176.0px;color:#999999;letter-spacing:-0.35px;transform:scaleX(0.9100);transform-origin:center center;">ЧТ 02.11</span>
<span class="t" style="font-size:20.5px;left:472.9px;top:1248.0px;letter-spacing:0.22px;-webkit-text-stroke:0.2px currentColor;">Постоянные пользователи</span>
<span class="t" style="font-size:20.5px;left:781.8px;top:1248.0px;letter-spacing:0.18px;-webkit-text-stroke:0.2px currentColor;">Новые пользователи</span>
<span class="t" style="font-size:33px;left:422.2px;top:1374.0px;font-weight:700;letter-spacing:-0.66px;transform:scaleX(0.9476);transform-origin:left center;">Пользователи и частота заказов</span>
<span class="t" style="font-size:26.4px;left:447.1px;top:1462.0px;letter-spacing:-0.06px;-webkit-text-stroke:0.5px currentColor;">Пользователи</span>
<span class="t" style="font-size:26.4px;left:1573.5px;top:1462.0px;letter-spacing:-0.18px;-webkit-text-stroke:0.5px currentColor;">Частота заказов</span>
<span class="t" style="font-size:19px;left:450.2px;top:1528.0px;color:#999999;">4</span>
<span class="t" style="font-size:19px;left:1576.4px;top:1528.0px;color:#999999;">8</span>
</body></html>
